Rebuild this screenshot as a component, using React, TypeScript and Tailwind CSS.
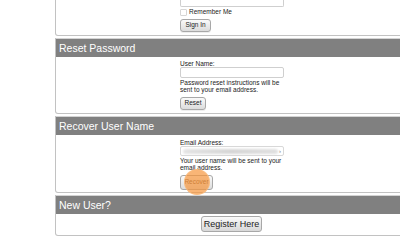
import React from "react";

const font = { fontFamily: '"Liberation Sans", Arial, sans-serif' };

function Btn({ children, w }: { children: React.ReactNode; w: string }) {
  return (
    <button
      className={`${w} h-[13px] rounded-[3px] border border-[#a8a8a8] bg-gradient-to-b from-[#fafafa] to-[#dcdcdc] text-[6.5px] leading-none text-[#222] shadow-[0_1px_0_#eee] flex items-center justify-center`}
    >
      {children}
    </button>
  );
}

function Header({ title }: { title: string }) {
  return (
    <div className="h-[19px] bg-[#808080] border-t border-[#d4d4d4] pl-[3px] flex items-center text-[10.5px] text-white leading-none">
      {title}
    </div>
  );
}

export default function App() {
  return (
    <div className="w-[400px] h-[250px] overflow-hidden bg-white relative leading-none" style={font}>
      <div className="ml-[55px] w-[353px] flex flex-col gap-[2px]">
        {/* Sign in panel (cut off) */}
        <div className="border border-t-0 border-[#c2c2c2] rounded-b-[3px] pl-[124px] pb-[3px] flex flex-col">
          <div className="h-[7px] w-[104px] border border-t-0 border-[#cfcfcf] rounded-b-[2px] bg-white" />
          <div className="mt-[2px] flex items-center gap-[2px] h-[7px]">
            <div className="w-[7px] h-[7px] border border-[#d6d6d6] rounded-[1px] bg-white" />
            <span className="text-[6.5px] leading-none text-[#222]">Remember Me</span>
          </div>
          <div className="mt-[3px] flex">
            <Btn w="w-[31px]">Sign In</Btn>
          </div>
        </div>

        {/* Reset password */}
        <div className="border-x border-b border-[#c2c2c2] rounded-b-[3px]">
          <Header title="Reset Password" />
          <div className="pl-[124px] pt-[3px] pb-[3px] flex flex-col">
            <div className="text-[6.5px] leading-[7px] text-[#1a1a1a]">User Name:</div>
            <div className="h-[11px] w-[104px] border border-[#cfcfcf] rounded-[2px] bg-white" />
            <div className="mt-[1px] text-[6.5px] leading-[7px] text-[#1a1a1a] w-[100px]">
              Password reset instructions will be sent to your email address.
            </div>
            <div className="mt-[4px] flex">
              <Btn w="w-[26px]">Reset</Btn>
            </div>
          </div>
        </div>

        {/* Recover user name */}
        <div className="border-x border-b border-[#c2c2c2] rounded-b-[3px]">
          <Header title="Recover User Name" />
          <div className="pl-[124px] pt-[4px] pb-[2px] relative flex flex-col">
            <div className="text-[6.5px] leading-[7px] text-[#1a1a1a]">Email Address:</div>
            <div className="h-[10px] w-[104px] border border-[#d8d8d8] rounded-[2px] bg-white flex items-center px-[2px]">
              <div className="flex-1 h-[5px] rounded-full bg-gradient-to-r from-[#e4e4e4] via-[#d6d6d6] to-[#e0e0e0] blur-[1px]" />
              <span className="text-[6px] leading-none text-[#777] ml-[1px]">›</span>
            </div>
            <div className="mt-[1px] text-[6.5px] leading-[7px] text-[#1a1a1a] w-[104px]">
              Your user name will be sent to your email address.
            </div>
            <div className="mt-[4px] flex">
              <button className="w-[33px] h-[15px] rounded-[3px] border border-[#a8a8a8] bg-gradient-to-b from-[#fafafa] to-[#dcdcdc] text-[6.5px] leading-none text-[#6b4a2a] flex items-center justify-center">
                Recover
              </button>
            </div>
            <div className="absolute left-[128px] top-[34px] w-[26px] h-[26px] rounded-full bg-[rgba(246,150,60,0.7)] border border-[rgba(250,190,130,0.8)]" />
          </div>
        </div>

        {/* New user */}
        <div className="border-x border-b border-[#c2c2c2] rounded-b-[3px]">
          <Header title="New User?" />
          <div className="flex justify-center pt-[2px] pb-[3px]">
            <button className="w-[61px] h-[16px] rounded-[3px] border border-[#a8a8a8] bg-gradient-to-b from-[#fafafa] to-[#d8d8d8] text-[9px] leading-none text-[#222] flex items-center justify-center">
              Register Here
            </button>
          </div>
        </div>
      </div>
    </div>
  );
}
